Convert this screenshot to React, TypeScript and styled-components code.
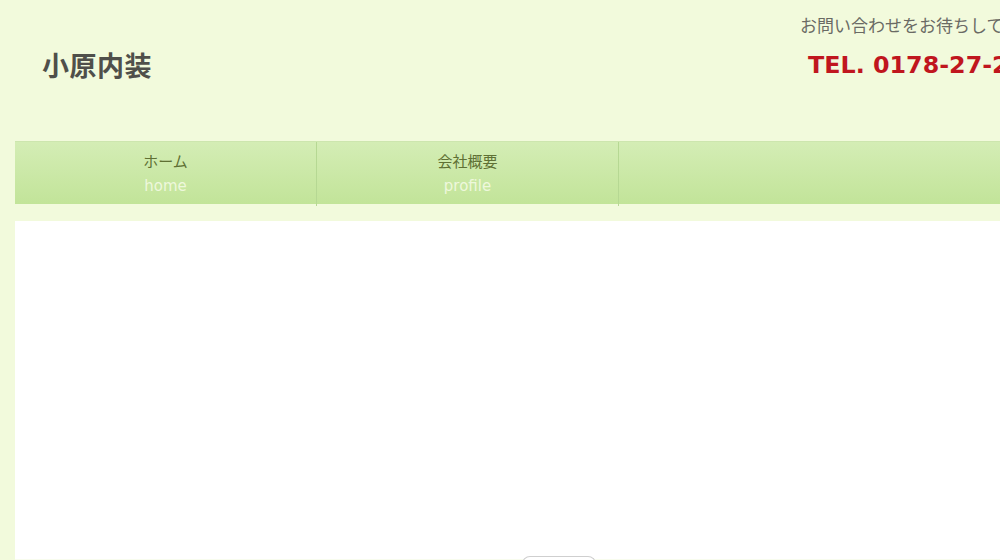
import React from "react"
import styled, { createGlobalStyle } from "styled-components"

const GlobalStyle = createGlobalStyle`
  html, body {
    margin: 0;
    padding: 0;
    background: #f2fadc;
    overflow-x: hidden;
  }
  body {
    font-family: "Noto Sans CJK JP", "Noto Sans", sans-serif;
  }
`

const navItems = [
  { ja: "ホーム", en: "home" },
  { ja: "会社概要", en: "profile" },
]

const App = () => {
  return (
    <>
      <GlobalStyle />
      <Page>
        <Header>
          <SiteTitle>小原内装</SiteTitle>
          <Contact>
            <ContactLead>お問い合わせをお待ちしております。</ContactLead>
            <Tel>TEL. 0178-27-2525</Tel>
          </Contact>
        </Header>
        <Nav>
          {navItems.map((item) => (
            <NavItem key={item.en} href="#">
              <NavJa>{item.ja}</NavJa>
              <NavEn>{item.en}</NavEn>
            </NavItem>
          ))}
        </Nav>
        <Main>
          <Pager />
        </Main>
      </Page>
    </>
  )
}

const Page = styled.div`
  width: 1170px;
  margin-left: 15px;
`

const Header = styled.header`
  display: grid;
  grid-template-columns: 785px auto;
  height: 141px;
`

const SiteTitle = styled.h1`
  margin: 0;
  padding: 48px 0 0 27px;
  font-size: 27px;
  line-height: 34px;
  font-weight: bold;
  letter-spacing: 0.5px;
  color: #4f4f4a;
`

const Contact = styled.div`
  padding-top: 12px;
`

const ContactLead = styled.p`
  margin: 0;
  font-size: 17px;
  line-height: 26px;
  color: #6a6a64;
  white-space: nowrap;
`

const Tel = styled.p`
  margin: 11px 0 0 8px;
  font-family: "DejaVu Sans", "Noto Sans CJK JP", sans-serif;
  font-size: 23.8px;
  line-height: 32px;
  font-weight: bold;
  color: #c0161e;
  white-space: nowrap;
`

const Nav = styled.nav`
  display: flex;
  height: 63px;
  background: linear-gradient(#d4edb5, #c2e499);
  border-top: 1px solid #cde6ae;
  box-sizing: border-box;
`

const NavItem = styled.a`
  display: flex;
  flex-direction: column;
  align-items: center;
  width: 302px;
  border-right: 1px solid #b6d893;
  padding-top: 9px;
  text-decoration: none;
  height: 64px;
  box-sizing: border-box;
`

const NavJa = styled.span`
  font-size: 15px;
  line-height: 20px;
  color: #5f7034;
`

const NavEn = styled.span`
  margin-top: 5px;
  font-family: "DejaVu Sans", "Noto Sans", sans-serif;
  font-size: 15px;
  line-height: 20px;
  color: #eef8dc;
`

const Main = styled.main`
  position: relative;
  margin-top: 17px;
  height: 338px;
  background: #ffffff;
  border-bottom: 1px solid #f8fcee;
`

const Pager = styled.div`
  position: absolute;
  left: 507px;
  bottom: -6px;
  width: 72px;
  height: 8px;
  background: #ffffff;
  border: 1px solid #cfcfcf;
  border-bottom: none;
  border-radius: 8px 8px 0 0;
`

export default App
